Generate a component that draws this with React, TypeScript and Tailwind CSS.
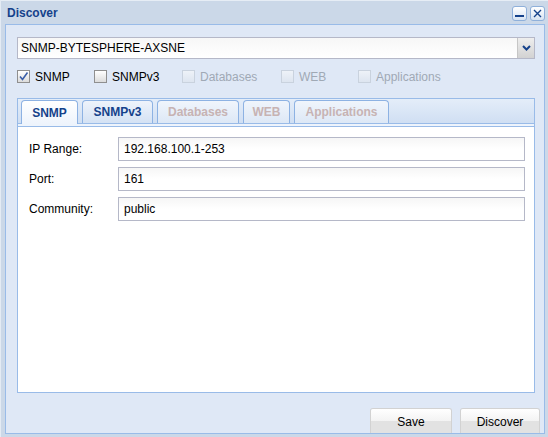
import React from "react";

const font = { fontFamily: '"Liberation Sans", Arial, sans-serif' };

function Check({ checked, disabled, label }: { checked?: boolean; disabled?: boolean; label: string }) {
  return (
    <div className="flex items-center">
      <div
        className={
          "w-[13px] h-[13px] border flex items-center justify-center " +
          (disabled
            ? "border-[#c9d2de] bg-gradient-to-b from-[#eef2f8] to-[#dde5f0]"
            : "border-[#8f8f8f] bg-gradient-to-b from-[#ffffff] to-[#dcdcdc]")
        }
      >
        {checked && (
          <svg width="11" height="11" viewBox="0 0 11 11">
            <path d="M2 5.5 L4.5 8.5 L9.5 1.5" stroke="#3a5ea8" strokeWidth="1.6" fill="none" />
          </svg>
        )}
      </div>
      <span className={"ml-[5px] text-[12px] " + (disabled ? "text-[#a0a9b5]" : "text-black")}>{label}</span>
    </div>
  );
}

function Tab({ label, active, disabled, w }: { label: string; active?: boolean; disabled?: boolean; w: string }) {
  return (
    <div
      className={
        "h-[23px] rounded-t-[4px] border border-b-0 border-[#8db2e3] flex items-center justify-center text-[12px] font-bold " +
        w +
        " " +
        (active
          ? "bg-gradient-to-b from-[#ffffff] to-[#eef4fc] text-[#15428b] h-[24px] -mb-[1px] relative z-10"
          : disabled
          ? "bg-gradient-to-b from-[#f0f5fc] to-[#dde8f6] text-[#c7b3b3]"
          : "bg-gradient-to-b from-[#eef3fb] to-[#d4e2f4] text-[#15428b]")
      }
    >
      {label}
    </div>
  );
}

function Field({ label, value }: { label: string; value: string }) {
  return (
    <div className="flex items-center h-[24px]">
      <div className="w-[89px] text-[12px] text-black">{label}</div>
      <div className="w-[407px] h-[24px] border border-[#b5b8c8] bg-gradient-to-b from-[#f6f6f6] to-[#ffffff] via-[#ffffff] flex items-center pl-[5px] text-[12px] text-black">
        {value}
      </div>
    </div>
  );
}

function Btn({ label, w }: { label: string; w: string }) {
  return (
    <div className={"h-[25px] border border-b-0 border-[#d2d2d2] rounded-t-[3px] flex flex-col overflow-hidden relative " + w}>
      <div className="h-[12px] bg-gradient-to-b from-[#ffffff] to-[#f3f3f3]" />
      <div className="flex-1 bg-[#e2e2e2]" />
      <div className="absolute inset-0 flex items-center justify-center text-[12px] text-black pt-[1px]">{label}</div>
    </div>
  );
}

export default function App() {
  return (
    <div style={font} className="w-[548px] h-[437px] bg-[#cbd8e8] border-l border-[#e4ebf4] flex flex-col overflow-hidden">
      <div className="h-[24px] flex items-center pl-[6px] pr-[3px] border-t border-[#e6edf5]">
        <div className="text-[12px] font-bold text-[#15428b] pt-[1px]">Discover</div>
        <div className="ml-auto flex gap-[3px] pt-[1px]">
          <div className="w-[15px] h-[15px] rounded-[3px] border border-[#8fb0da] bg-gradient-to-b from-[#ffffff] to-[#d7e3f2] flex items-end justify-center pb-[3px]">
            <div className="w-[9px] h-[2px] bg-[#15428b]" />
          </div>
          <div className="w-[15px] h-[15px] rounded-[3px] border border-[#8fb0da] bg-gradient-to-b from-[#ffffff] to-[#d7e3f2] flex items-center justify-center">
            <svg width="9" height="9" viewBox="0 0 9 9">
              <path d="M1 1 L8 8 M8 1 L1 8" stroke="#15428b" strokeWidth="1.4" />
            </svg>
          </div>
        </div>
      </div>
      <div className="ml-[4px] w-[540px] h-[410px] border border-[#99bbe8] bg-[#dfe8f6] flex flex-col">
        <div className="pl-[11px] pt-[12px]">
          <div className="w-[518px] h-[22px] border border-[#b5b8c8] flex bg-white">
            <div className="flex-1 flex items-center pl-[3px] text-[12px] text-black bg-gradient-to-b from-[#f7f7f7] to-[#ffffff]">
              SNMP-BYTESPHERE-AXSNE
            </div>
            <div className="w-[17px] border-l border-[#c6c6c6] bg-gradient-to-b from-[#eeeeee] to-[#d2d2d2] flex items-center justify-center">
              <svg width="9" height="6" viewBox="0 0 9 6">
                <path d="M1 1 L4.5 4.5 L8 1" stroke="#15428b" strokeWidth="2" fill="none" />
              </svg>
            </div>
          </div>
          <div className="flex items-center h-[13px] mt-[11px]">
            <div className="w-[77px]"><Check checked label="SNMP" /></div>
            <div className="w-[88px]"><Check label="SNMPv3" /></div>
            <div className="w-[99px]"><Check disabled label="Databases" /></div>
            <div className="w-[77px]"><Check disabled label="WEB" /></div>
            <div><Check disabled label="Applications" /></div>
          </div>
          <div className="mt-[15px] w-[518px] h-[295px] flex flex-col">
            <div className="border border-b-0 border-[#99bbe8] bg-gradient-to-b from-[#e4edf9] to-[#d0dff3] pt-[1px] pl-[3px] flex items-end gap-[4px]">
              <Tab label="SNMP" active w="w-[57px]" />
              <Tab label="SNMPv3" w="w-[71px]" />
              <Tab label="Databases" disabled w="w-[82px]" />
              <Tab label="WEB" disabled w="w-[47px]" />
              <Tab label="Applications" disabled w="w-[95px]" />
            </div>
            <div className="h-[3px] border border-[#99bbe8] border-b-0 bg-[#eef4fc]" />
            <div className="flex-1 border border-[#99bbe8] bg-white pt-[10px] pl-[11px] flex flex-col gap-[6px]">
              <Field label="IP Range:" value="192.168.100.1-253" />
              <Field label="Port:" value="161" />
              <Field label="Community:" value="public" />
            </div>
          </div>
        </div>
        <div className="flex-1 flex items-end justify-end pr-[4px] gap-[8px]">
          <Btn label="Save" w="w-[82px]" />
          <Btn label="Discover" w="w-[80px]" />
        </div>
      </div>
    </div>
  );
}
